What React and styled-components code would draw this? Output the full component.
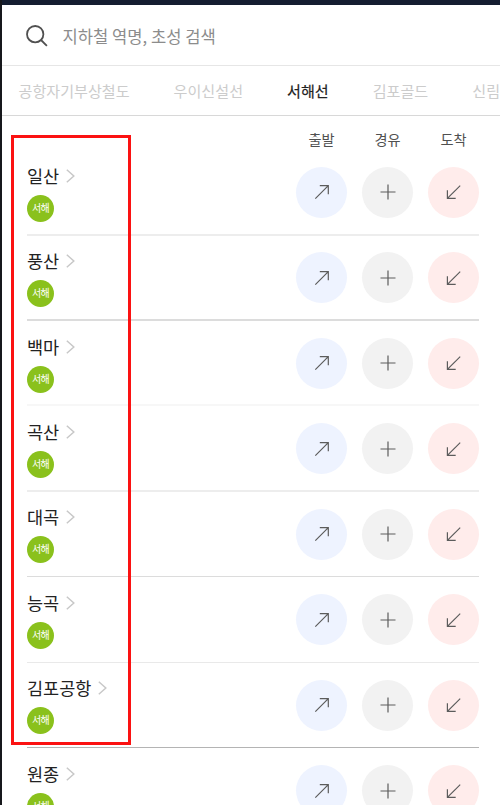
import React, { useState } from "react";
import styled, { createGlobalStyle } from "styled-components";

const lines = ["공항자기부상철도", "우이신설선", "서해선", "김포골드", "신림선"];

const stations = [
  { name: "일산", rule: 2, color: "#ededed" },
  { name: "풍산", rule: 2, color: "#dcdcdc" },
  { name: "백마", rule: 2, color: "#f7f7f7" },
  { name: "곡산", rule: 2, color: "#ededed" },
  { name: "대곡", rule: 1, color: "#dcdcdc" },
  { name: "능곡", rule: 1, color: "#e9e9e9" },
  { name: "김포공항", rule: 1, color: "#b4b4b4" },
  { name: "원종", rule: 1, color: "#e6e6e6" },
];

export default function App() {
  const [active, setActive] = useState("서해선");

  return (
    <>
      <GlobalStyle />
      <Screen>
        <StatusBar />
        <SearchBar>
          <SearchIcon viewBox="0 0 22 22">
            <circle cx="9.2" cy="9.2" r="8.2" />
            <path d="M15 15L20.9 20.9" />
          </SearchIcon>
          <SearchText>지하철 역명, 초성 검색</SearchText>
        </SearchBar>
        <Tabs>
          {lines.map((line) => (
            <Tab
              key={line}
              $active={line === active}
              onClick={() => setActive(line)}
            >
              {line}
            </Tab>
          ))}
        </Tabs>
        <Content>
          <Header>
            <Label>출발</Label>
            <Label>경유</Label>
            <Label>도착</Label>
          </Header>
          {stations.map((s) => (
            <Row key={s.name} $rule={s.rule} $color={s.color}>
              <Station>
                <Name>
                  {s.name}
                  <Chevron viewBox="0 0 9 14">
                    <path d="M0.8 0.8L7.8 7L0.8 13.2" />
                  </Chevron>
                </Name>
                <Badge>서해</Badge>
              </Station>
              <Actions>
                <Circle $bg="#eef3ff">
                  <ActionIcon viewBox="0 0 16 16">
                    <path d="M1.3 14.7L14.3 1.7M5.8 1.7H14.3V10.2" />
                  </ActionIcon>
                </Circle>
                <Circle $bg="#f2f2f2">
                  <ActionIcon viewBox="0 0 16 16">
                    <path d="M8 0.5V15.5M0.5 8H15.5" />
                  </ActionIcon>
                </Circle>
                <Circle $bg="#ffeceb">
                  <ActionIcon viewBox="0 0 16 16">
                    <path d="M14.2 1.6L1.4 14.4M1.4 6.2V14.4H9.7" />
                  </ActionIcon>
                </Circle>
              </Actions>
            </Row>
          ))}
        </Content>
        <Highlight />
      </Screen>
    </>
  );
}

const GlobalStyle = createGlobalStyle`
  * {
    box-sizing: border-box;
  }
  body {
    margin: 0;
    overflow: hidden;
    font-family: "Noto Sans CJK KR", "Noto Sans", sans-serif;
  }
`;

const Screen = styled.div`
  position: relative;
  height: 805px;
  overflow: hidden;
  background: #fff;
  border-left: 2px solid #17181c;
`;

const StatusBar = styled.div`
  height: 5px;
  background: #141d30;
`;

const SearchBar = styled.div`
  display: flex;
  align-items: center;
  gap: 14.5px;
  height: 61px;
  padding: 1px 0 0 24px;
  border-bottom: 1px solid #e6e6e6;
`;

const SearchIcon = styled.svg`
  width: 22px;
  height: 22px;
  fill: none;
  stroke: #505050;
  stroke-width: 1.8;
`;

const SearchText = styled.div`
  font-size: 16.6px;
  line-height: 24px;
  color: #8c8c8c;
  white-space: nowrap;
`;

const Tabs = styled.div`
  display: flex;
  align-items: center;
  gap: 44px;
  height: 50px;
  padding: 0 0 2px 16.5px;
  border-bottom: 1px solid #d8d8d8;
`;

const Tab = styled.div`
  flex: none;
  font-size: 15.1px;
  line-height: 22px;
  color: ${(props) => (props.$active ? "#222" : "#cccccc")};
  -webkit-text-stroke: ${(props) => (props.$active ? "0.2px #222" : "0")};
  cursor: pointer;
`;

const Content = styled.div`
  padding: 12px 21px 0 25px;
`;

const Header = styled.div`
  display: flex;
  justify-content: flex-end;
  gap: 15px;
  height: 22.1px;
`;

const Label = styled.div`
  width: 51px;
  font-size: 14.2px;
  line-height: 22px;
  text-align: center;
  color: #505050;
`;

const Row = styled.div`
  display: flex;
  justify-content: space-between;
  height: 85.45px;
  padding-top: 16.9px;
  border-bottom: ${(props) => `${props.$rule}px solid ${props.$color}`};
`;

const Station = styled.div`
  display: flex;
  flex-direction: column;
  gap: 9.5px;
`;

const Name = styled.div`
  display: flex;
  align-items: center;
  gap: 6.5px;
  height: 19px;
  margin-top: -0.8px;
  font-size: 17.5px;
  line-height: 18px;
  color: #222;
`;

const Chevron = styled.svg`
  width: 9px;
  height: 14px;
  fill: none;
  stroke: #c8c8c8;
  stroke-width: 1.5;
`;

const Badge = styled.div`
  width: 27px;
  height: 27px;
  border-radius: 50%;
  background: #8ac11c;
  color: #fff;
  font-size: 10px;
  line-height: 26px;
  letter-spacing: -0.6px;
  text-align: center;
`;

const Actions = styled.div`
  display: flex;
  gap: 15px;
`;

const Circle = styled.div`
  display: flex;
  align-items: center;
  justify-content: center;
  width: 51px;
  height: 51px;
  border-radius: 50%;
  background: ${(props) => props.$bg};
`;

const ActionIcon = styled.svg`
  width: 16px;
  height: 16px;
  fill: none;
  stroke: #5c5c5c;
  stroke-width: 1.2;
`;

/* red frame laid over the station names */
const Highlight = styled.div`
  position: absolute;
  top: 135px;
  left: 9px;
  width: 120px;
  height: 610px;
  border: 3px solid #fb1212;
  pointer-events: none;
`;
